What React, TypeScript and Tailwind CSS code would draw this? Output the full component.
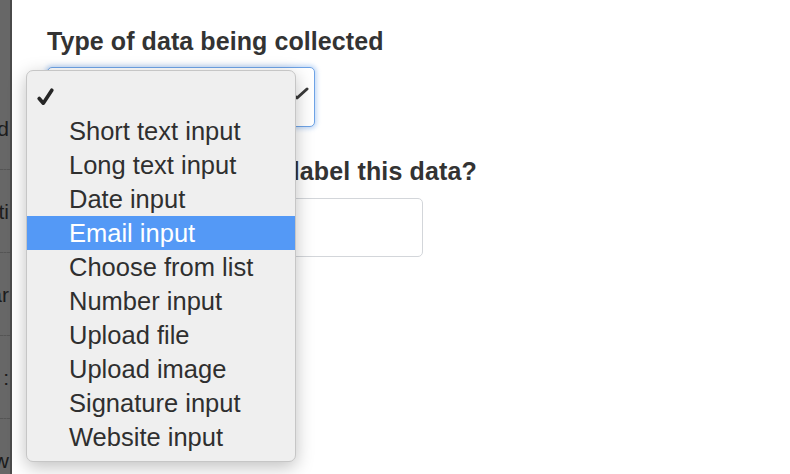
import React from "react";

const items = [
  "Short text input",
  "Long text input",
  "Date input",
  "Email input",
  "Choose from list",
  "Number input",
  "Upload file",
  "Upload image",
  "Signature input",
  "Website input",
];

const sideRows = ["Field", "Opti", "Var", "l :", "Show"];

export default function App() {
  return (
    <div
      className="flex h-[474px] w-[790px] overflow-hidden bg-white text-[#333]"
      style={{ fontFamily: '"Liberation Sans", Arial, Helvetica, sans-serif' }}
    >
      {/* dimmed sidebar edge */}
      <div className="flex w-[12px] shrink-0 flex-col overflow-hidden border-r-2 border-[#4a4a4a] bg-[#676767] pt-[87px]">
        {sideRows.map((t, i) => (
          <div
            key={i}
            className={
              "flex h-[83px] shrink-0 items-center justify-end whitespace-nowrap text-[21px] leading-none text-[#1c1c1c] " +
              (i < 4 ? "border-b border-dashed border-[#555]" : "")
            }
          >
            <span className="pr-[1px]">{t}</span>
          </div>
        ))}
      </div>

      {/* main content */}
      <div className="relative flex-1 pl-[35px] pt-[26px]">
        <div className="text-[25px] font-bold leading-[30px] tracking-[0.08px] text-[#333]">
          Type of data being collected
        </div>
        <div className="relative mt-[11px] h-[60px] w-[268px] rounded-[5px] border border-[#6ea3e6] bg-white shadow-[0_0_4px_2px_rgba(110,165,235,0.4)]">
          <svg
            className="absolute left-[237px] top-[19px]"
            width="24"
            height="14"
            viewBox="0 0 24 14"
          >
            <path
              d="M2 2 L12 11 L22 2"
              fill="none"
              stroke="#3a3a3a"
              strokeWidth="3"
              strokeLinecap="round"
              strokeLinejoin="round"
            />
          </svg>
        </div>
        <div className="mt-[29px] text-[25px] font-bold leading-[30px] tracking-[0.14px] text-[#333]">
          How do you want to label this data?
        </div>
        <div className="mt-[12px] h-[59px] w-[376px] rounded-[5px] border border-[#d3d6da] bg-white" />

        {/* open dropdown menu */}
        <div className="absolute left-[14px] top-[70px] w-[270px] rounded-[7px] border border-[#c6c6c6] bg-[#efefef] pb-[7px] pt-[9px] shadow-[0_5px_18px_rgba(0,0,0,0.25)]">
          <div className="relative flex h-[34px] items-center">
            <svg
              className="absolute left-[10px] top-[8px]"
              width="17"
              height="18"
              viewBox="0 0 17 18"
            >
              <path
                d="M2.2 10.5 L6.3 15.2 L14.8 2.2"
                fill="none"
                stroke="#262626"
                strokeWidth="3.6"
                strokeLinecap="round"
                strokeLinejoin="round"
              />
            </svg>
          </div>
          {items.map((t) => {
            const active = t === "Email input";
            return (
              <div
                key={t}
                className={
                  "h-[34px] whitespace-nowrap pl-[42px] text-[25.5px] leading-[34px] " +
                  (active ? "bg-[#5499f6] text-white" : "text-[#2f2f2f]")
                }
              >
                {t}
              </div>
            );
          })}
        </div>
      </div>
    </div>
  );
}
